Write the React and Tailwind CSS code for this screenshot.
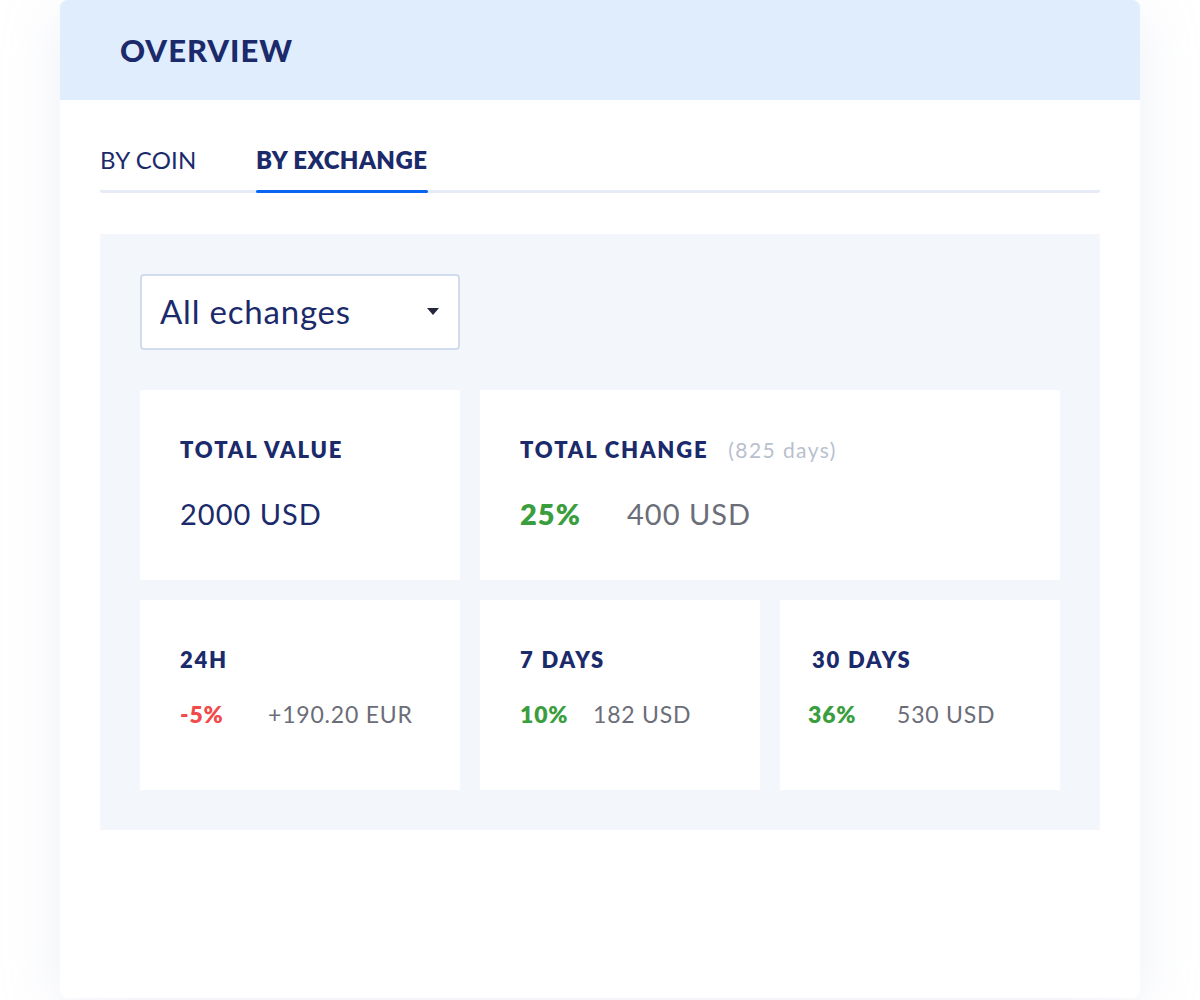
function StatCard({ title, note, children, className = '' }) {
  return (
    <div className={`flex h-[190px] flex-col bg-white pt-[45px] ${className}`}>
      <div className="flex h-[30px] items-center">
        <span className="text-[22px] font-extrabold leading-[30px] tracking-[1.8px] text-[#1b2a6b]">{title}</span>
        {note && <span className="ml-[20px] text-[21px] leading-[30px] tracking-[1.4px] text-[#b9bfce]">{note}</span>}
      </div>
      {children}
    </div>
  )
}

export default function App() {
  return (
    <div className="min-h-[1000px] bg-white px-[60px] font-['Lato','Noto_Sans',sans-serif]">
      <div className="h-[998px] overflow-hidden rounded-[8px] bg-white shadow-[0_10px_60px_rgba(180,190,220,0.22)]">
        <div className="flex h-[100px] items-center bg-[#e0edfd] pl-[60px]">
          <h1 className="text-[31px] font-black tracking-[1px] text-[#1b2a6b]">OVERVIEW</h1>
        </div>

        <div className="px-[40px]">
          <div className="mt-[30px] flex h-[63px] rounded-[2px] border-b-[3px] border-[#e6ebf7]">
            <button className="flex h-[60px] w-[95px] items-center whitespace-nowrap text-[24px] tracking-[0.2px] text-[#1b2a6b]">BY COIN</button>
            <button className="relative ml-[61px] flex h-[60px] w-[172px] items-center whitespace-nowrap text-[24px] font-extrabold tracking-[0.4px] text-[#1b2a6b]">
              BY EXCHANGE
              <span className="absolute -bottom-[3px] left-0 h-[3px] w-full rounded-full bg-[#0a66f2]"></span>
            </button>
          </div>

          <div className="mt-[41px] bg-[#f3f6fb] p-[40px]">
            <div className="flex h-[76px] w-[320px] items-center justify-between rounded-[4px] border-2 border-[#d3dcef] bg-white pl-[18px] pr-[19px]">
              <span className="text-[33px] tracking-[0.8px] text-[#1b2a6b]">All echanges</span>
              <svg width="12" height="8" viewBox="0 0 12 8">
                <path d="M0 0 L12 0 L6 7 Z" fill="#24263a" />
              </svg>
            </div>

            <div className="mt-[40px] flex gap-[20px]">
              <StatCard title="TOTAL VALUE" className="w-[320px] px-[40px]">
                <span className="mt-[29px] text-[29px] leading-[40px] tracking-[1px] text-[#1b2a6b]">2000 USD</span>
              </StatCard>
              <StatCard title="TOTAL CHANGE" note="(825 days)" className="w-[580px] px-[40px]">
                <div className="mt-[29px] flex items-center text-[29px] leading-[40px] tracking-[1px]">
                  <span className="w-[107px] font-extrabold text-[#3a9e3f]">25%</span>
                  <span className="text-[#6b6d78]">400 USD</span>
                </div>
              </StatCard>
            </div>

            <div className="mt-[20px] flex gap-[20px]">
              <StatCard title="24H" className="w-[320px] px-[40px]">
                <div className="mt-[24px] flex items-center text-[23px] leading-[30px] tracking-[0.8px]">
                  <span className="w-[88px] font-extrabold text-[#f04a4a]">-5%</span>
                  <span className="text-[#6b6d78]">+190.20 EUR</span>
                </div>
              </StatCard>
              <StatCard title="7 DAYS" className="w-[280px] px-[40px]">
                <div className="mt-[24px] flex items-center text-[23px] leading-[30px] tracking-[0.8px]">
                  <span className="w-[73px] font-extrabold text-[#3a9e3f]">10%</span>
                  <span className="text-[#6b6d78]">182 USD</span>
                </div>
              </StatCard>
              <StatCard title="30 DAYS" className="w-[280px] px-[32px]">
                <div className="-ml-[4px] mt-[24px] flex items-center text-[23px] leading-[30px] tracking-[0.8px]">
                  <span className="w-[89px] font-extrabold text-[#3a9e3f]">36%</span>
                  <span className="text-[#6b6d78]">530 USD</span>
                </div>
              </StatCard>
            </div>
          </div>
        </div>
      </div>
    </div>
  )
}
